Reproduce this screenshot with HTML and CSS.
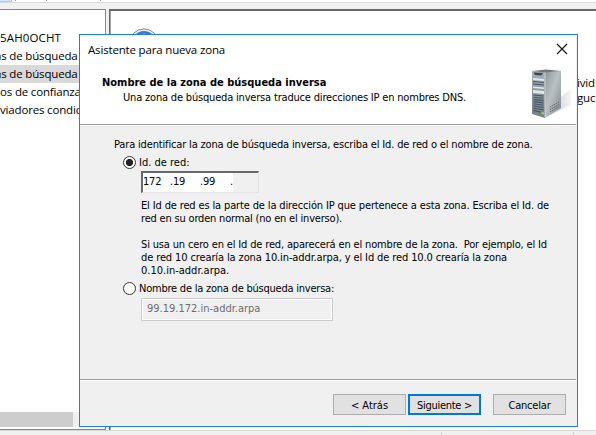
FILE: index.html
```html
<!DOCTYPE html>
<html lang="es">
<head>
<meta charset="utf-8">
<title>Asistente para nueva zona</title>
<link rel="stylesheet" href="styles.css">
</head>
<body>
<div class="window">
  <div class="toolbar"><i class="tool-active"></i><i class="tick t1"></i><i class="tick t2"></i><i class="tick t3"></i></div>
  <div class="panes">
    <nav class="tree">
      <ul>
        <li class="host">5AH0OCHT</li>
        <li>as de búsqueda</li>
        <li class="selected">as de búsqueda</li>
        <li class="shift">os de confianza</li>
        <li class="shift">viadores condicionales</li>
      </ul>
      <div class="scrollbar"><div class="thumb"></div></div>
    </nav>
    <main class="content">
      <svg class="info" width="30" height="30" viewBox="0 0 30 30"><circle cx="15" cy="15" r="14.2" fill="#e8e8e8" stroke="#8b8b8b"/><circle cx="15" cy="15" r="12" fill="#3f72d8"/><path d="M7 9Q15 1 23 9" fill="#5c8ae4"/></svg>
      <p class="copy">ivid<br>guc</p>
    </main>
  </div>
  <footer class="status"><span></span><span></span><span></span></footer>
</div>

<section class="dialog">
  <header class="head">
    <div class="titlebar">
      <span class="caption">Asistente para nueva zona</span>
      <svg width="12" height="12" viewBox="0 0 12 12"><path d="M1 1L11 11M11 1L1 11" stroke="#111" stroke-width="1.1"/></svg>
    </div>
    <div class="banner">
      <div>
        <h1>Nombre de la zona de búsqueda inversa</h1>
        <p class="sub">Una zona de búsqueda inversa traduce direcciones IP en nombres DNS.</p>
      </div>
      <svg class="server" width="44" height="52" viewBox="0 0 44 52">
        <defs>
          <linearGradient id="side" x1="0" y1="0" x2="1" y2="1"><stop offset="0" stop-color="#8d979b"/><stop offset=".45" stop-color="#b9c1c3"/><stop offset="1" stop-color="#7b868b"/></linearGradient>
          <linearGradient id="front" x1="0" y1="0" x2="0" y2="1"><stop offset="0" stop-color="#a9b2b6"/><stop offset="1" stop-color="#717e85"/></linearGradient>
          <linearGradient id="shade" x1="0" y1="0" x2="1" y2="0"><stop offset="0" stop-color="#c4c4c4"/><stop offset="1" stop-color="#f5f5f5"/></linearGradient>
        </defs>
        <path d="M28 31L41 21V37L18 48Z" fill="url(#shade)"/>
        <path d="M2 3L15 4V50L2 46Z" fill="url(#front)"/>
        <path d="M15 4L31 3V40L15 50Z" fill="url(#side)"/>
        <path d="M2 3L16 1.5L31 3L15 4.5Z" fill="#6e7a7f"/>
        <path d="M3.5 4.5L13 5L11.500 7.500L5 7Z" fill="#3f484d"/>
        <path d="M3 10L14 11V13L3 12ZM3 18.500L14 19.500V21L3 20ZM3 22L14 23V26L3 25Z" fill="#e1e6e7"/>
        <path d="M3 13.500L14 14.500M3 16L14 17M3.500 27L13.500 28M3.500 29.200L13.500 30.300M3.500 31.400L13.500 32.600M3.500 33.600L13.500 34.900M3.500 35.800L13.500 37.200M3.500 38L13.500 39.500M3.500 40.200L13.500 41.800M3.500 42.400L11 44.200" stroke="#465666" stroke-width="1.1"/>
        <path d="M20 39L29 34M20 41.500L29 36.500M20 44L29 38.500" stroke="#59656b" stroke-width=".9" stroke-dasharray="1.500 .7"/>
        <path d="M15 4.500V49.500" stroke="#dce1e2" stroke-width=".8"/>
        <path d="M11.500 44L14 44.500V46.500L11.500 46Z" fill="#8de22b"/>
      </svg>
    </div>
  </header>
  <div class="body">
    <p class="intro">Para identificar la zona de búsqueda inversa, escriba el Id. de red o el nombre de zona.</p>
    <label class="option"><i class="radio on"></i><span>Id. de red:</span></label>
    <div class="ip"><span>172</span><b>.</b><span>19</span><b>.</b><span>99</span><b>.</b></div>
    <div class="help">
      <p class="h1">El Id de red es la parte de la dirección IP que pertenece a esta zona. Escriba el Id. de</p>
      <p class="h2">red en su orden normal (no en el inverso).</p>
      <p class="h3">Si usa un cero en el Id de red, aparecerá en el nombre de la zona.&nbsp; Por ejemplo, el Id</p>
      <p class="h4">de red 10 crearía la zona 10.in-addr.arpa, y el Id de red 10.0 crearía la zona</p>
      <p>0.10.in-addr.arpa.</p>
    </div>
    <label class="option second"><i class="radio"></i><span class="zone">Nombre de la zona de búsqueda inversa:</span></label>
    <div class="zonefield">99.19.172.in-addr.arpa</div>
  </div>
  <footer class="actions">
    <button>&lt; Atrás</button>
    <button class="primary">Siguiente &gt;</button>
    <button class="cancel">Cancelar</button>
  </footer>
</section>
</body>
</html>
```
FILE: styles.css
```css
* { box-sizing: border-box; margin: 0; padding: 0; }
body {
  width: 596px; height: 435px; overflow: hidden; position: relative;
  background: #f0f0f0; color: #000;
  font: 11px/13px "DejaVu Sans Condensed", "DejaVu Sans", sans-serif;
}

/* Console window behind the wizard */
.window { height: 435px; display: flex; flex-direction: column; font: 11.5px/18px "Open Sans", sans-serif; letter-spacing: -.17px; }
.toolbar { height: 3px; flex: none; display: flex; background: #fff; border-bottom: 1px solid #d9d9d9; }
.tool-active { width: 12px; height: 2px; background: #cce8ff; border-right: 1px solid #99d1ff; border-bottom: 1px solid #99d1ff; }
.tick { width: 1px; height: 1px; background: #999; }
.t1 { margin-left: 3px; }
.t2 { margin-left: 30px; }
.t3 { margin-left: 53px; }
.panes { flex: none; height: 427px; padding-top: 6px; display: flex; gap: 3px; }
.tree { width: 106px; background: #fff; border: solid #828790; border-width: 1px 1px 1px 0; display: flex; flex-direction: column; justify-content: space-between; overflow: hidden; }
.tree ul { list-style: none; padding-top: 19px; }
.tree li { height: 18px; white-space: nowrap; text-indent: -5px; }
.tree .host { text-indent: 0; letter-spacing: .15px; }
.tree .shift { text-indent: 0; }
.tree .selected { background: #d9d9d9; }
.scrollbar { height: 17px; background: #f0f0f0; border-bottom: 2px solid #fff; }
.thumb { width: 73px; height: 15px; background: #cdcdcd; }
.content { flex: 1; position: relative; background: #fff; border: solid #696969; border-width: 2px 0 0 1px; box-shadow: inset 1px 0 #a0a0a0; }
.info { position: absolute; left: 19px; top: 17px; }
.copy { position: absolute; left: 467px; top: 64px; line-height: 15px; }
.status { flex: 1; display: flex; background: #f0f0f0; border-top: 1px solid #d7d7d7; padding-top: 1px; }
.status span { width: 132px; border-right: 1px solid #d0d0d0; }
.status span:first-child { width: 442px; }
.status span:last-child { border: 0; flex: 1; }

/* Wizard */
.dialog { position: absolute; left: 79px; top: 34px; width: 499px; height: 393px; border: 1px solid #1883d7; background: #f0f0f0; display: flex; flex-direction: column; }
.head { height: 90px; flex: none; margin-right: 1px; background: #fff; border-bottom: 1px solid #a0a0a0; }
.titlebar { display: flex; justify-content: space-between; align-items: center; height: 28px; padding: 0 8px; }
.caption { font: 11.5px/18px "Open Sans", sans-serif; letter-spacing: -.17px; padding-top: 2px; }
.banner { display: flex; justify-content: space-between; padding: 12px 2px 0 22px; }
h1 { font-size: 11px; line-height: 15px; margin-bottom: 1px; }
.sub { padding-left: 21px; letter-spacing: -.182px; }
.server { margin-top: -7px; }
.body { height: 255px; flex: none; margin-right: 1px; border-top: 1px solid #fff; border-bottom: 1px solid #a0a0a0; padding: 12px 0 0 34px; white-space: nowrap; }
.intro { letter-spacing: -.158px; }
.option { display: flex; align-items: center; height: 13px; margin: 5px 0 0 9px; gap: 3px; }
.zone { letter-spacing: -.226px; }
.radio { width: 13px; height: 13px; border: 1px solid #333; border-radius: 50%; background: #fff; }
.radio.on { background: radial-gradient(circle, #222 3.2px, #fff 4px); }
.ip { display: flex; width: 118px; height: 22px; margin: 2px 0 0 27px; border: solid; border-width: 2px 1px 1px 2px; border-color: #696969 #e3e3e3 #e3e3e3 #696969; background: linear-gradient(90deg, #fff 90px, #f0f0f0 90px); line-height: 16px; padding-top: 1px; }
.ip span { width: 27px; letter-spacing: -.2px; }
.ip b { width: 3px; font-weight: normal; }
.help { margin: 6px 0 0 27px; }
.h1 { letter-spacing: -.141px; }
.h2 { letter-spacing: -.19px; }
.h3 { letter-spacing: -.155px; margin-top: 13px; }
.h4 { letter-spacing: -.115px; }
.zonefield { width: 192px; height: 23px; margin: 3px 0 0 27px; border: 1px solid #ccc; box-shadow: inset 0 0 0 1px #fff; color: #6d6d6d; line-height: 19px; padding-left: 5px; }
.actions { flex: 1; margin-right: 1px; border-top: 1px solid #fff; display: flex; justify-content: flex-end; gap: 2px; padding: 13px 10px 0 0; }
button { width: 73px; height: 21px; font: inherit; background: #e1e1e1; border: 1px solid #adadad; color: #000; padding-top: 1px; }
.primary { border: 2px solid #0078d7; letter-spacing: -.28px; }
.cancel { margin-left: 10px; letter-spacing: -.2px; }
```
